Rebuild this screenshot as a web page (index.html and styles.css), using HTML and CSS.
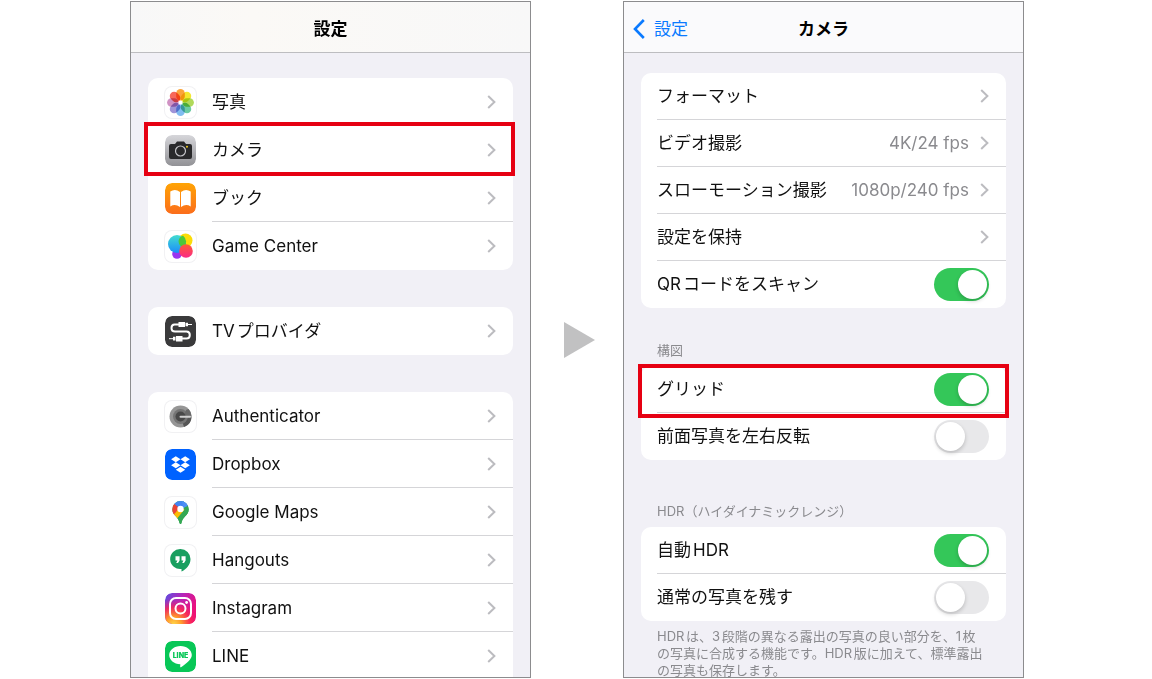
FILE: index.html
```html
<!DOCTYPE html>
<html lang="ja">
<head>
    <meta charset="UTF-8">
    <meta name="viewport" content="width=device-width, initial-scale=1.0">
    <title>設定 / カメラ</title>
    <link rel="stylesheet" href="styles.css">
</head>
<body>
    <svg class="defs" width="0" height="0" aria-hidden="true">
        <symbol id="chevron" viewBox="0 0 9 14">
            <path d="M1.2 1 L7.4 7 L1.2 13" fill="none" stroke="#bcbcc0" stroke-width="2"/>
        </symbol>
    </svg>

    <main class="steps">
        <section class="screen">
            <header class="navbar navbar-warm">
                <h1>設定</h1>
            </header>

            <div class="content">
                <nav class="card">
                    <a class="row" href="#photos">
                        <svg class="icon icon-white" viewBox="0 0 31 31">
                            <g class="petals" transform="translate(15.5 15.5)">
                                <rect x="-4.3" y="-13.4" width="8.6" height="11.4" rx="4.3" fill="#fba43a"/>
                                <rect x="-4.3" y="-13.4" width="8.6" height="11.4" rx="4.3" fill="#f4e730" transform="rotate(45)"/>
                                <rect x="-4.3" y="-13.4" width="8.6" height="11.4" rx="4.3" fill="#b0d95a" transform="rotate(90)"/>
                                <rect x="-4.3" y="-13.4" width="8.6" height="11.4" rx="4.3" fill="#6ccba2" transform="rotate(135)"/>
                                <rect x="-4.3" y="-13.4" width="8.6" height="11.4" rx="4.3" fill="#80bcf0" transform="rotate(180)"/>
                                <rect x="-4.3" y="-13.4" width="8.6" height="11.4" rx="4.3" fill="#a094d8" transform="rotate(225)"/>
                                <rect x="-4.3" y="-13.4" width="8.6" height="11.4" rx="4.3" fill="#d092c4" transform="rotate(270)"/>
                                <rect x="-4.3" y="-13.4" width="8.6" height="11.4" rx="4.3" fill="#f7685a" transform="rotate(315)"/>
                            </g>
                        </svg>
                        <span class="row-body">写真 <svg class="chevron"><use href="#chevron"/></svg></span>
                    </a>
                    <a class="row highlight highlight-link" href="#camera">
                        <svg class="icon" viewBox="0 0 31 31">
                            <defs>
                                <linearGradient id="silver" x1="0" y1="0" x2="0" y2="1">
                                    <stop offset="0" stop-color="#d6d6da"/>
                                    <stop offset="1" stop-color="#929296"/>
                                </linearGradient>
                            </defs>
                            <rect width="31" height="31" rx="7" fill="url(#silver)"/>
                            <path d="M6 9 H10 L12 6.5 H19 L21 9 H25 Q27 9 27 11 V22 Q27 24 25 24 H6 Q4 24 4 22 V11 Q4 9 6 9 Z" fill="#29292b"/>
                            <circle cx="15.5" cy="16" r="5" fill="#29292b" stroke="#c4c4c8" stroke-width="1.2"/>
                            <circle cx="22" cy="11.8" r="1" fill="#f3cf22"/>
                        </svg>
                        <span class="row-body">カメラ <svg class="chevron"><use href="#chevron"/></svg></span>
                    </a>
                    <a class="row" href="#books">
                        <svg class="icon" viewBox="0 0 31 31">
                            <defs>
                                <linearGradient id="orange" x1="0" y1="0" x2="0" y2="1">
                                    <stop offset="0" stop-color="#ffa405"/>
                                    <stop offset="1" stop-color="#fb6d1c"/>
                                </linearGradient>
                            </defs>
                            <rect width="31" height="31" rx="7" fill="url(#orange)"/>
                            <path d="M15 9 Q10 5 5.3 8.6 V23.5 Q10 20.5 15 24 Z M16 9 Q21 5 25.7 8.6 V23.5 Q21 20.5 16 24 Z" fill="#fff"/>
                        </svg>
                        <span class="row-body">ブック <svg class="chevron"><use href="#chevron"/></svg></span>
                    </a>
                    <a class="row" href="#game-center">
                        <svg class="icon icon-white" viewBox="0 0 31 31">
                            <defs>
                                <linearGradient id="gc-blue" x1="0" y1="0" x2="0" y2="1">
                                    <stop offset="0" stop-color="#42dcd0"/>
                                    <stop offset="1" stop-color="#1b8cfa"/>
                                </linearGradient>
                                <linearGradient id="gc-pink" x1="0" y1="0" x2="0" y2="1">
                                    <stop offset="0" stop-color="#ff5a36"/>
                                    <stop offset="1" stop-color="#fa2a86"/>
                                </linearGradient>
                            </defs>
                            <circle cx="20.5" cy="9.5" r="7" fill="#fbdc08"/>
                            <circle cx="12" cy="23" r="4.8" fill="#9a35f0"/>
                            <circle cx="12" cy="13" r="9" fill="url(#gc-blue)"/>
                            <path d="M13.5 10 A7 7 0 0 1 18 4.5 A9 9 0 0 1 19.4 16.5 A7 7 0 0 1 13.5 10 Z" fill="#4cc83a"/>
                            <circle cx="21" cy="20" r="6.8" fill="url(#gc-pink)"/>
                        </svg>
                        <span class="row-body">Game Center <svg class="chevron"><use href="#chevron"/></svg></span>
                    </a>
                </nav>

                <nav class="card">
                    <a class="row" href="#tv-provider">
                        <svg class="icon" viewBox="0 0 31 31">
                            <rect width="31" height="31" rx="7" fill="#3a3a3b"/>
                            <path d="M14 8.5 H9.5 Q6.5 8.5 6.5 12 Q6.5 15.5 10 15.5 H21.5 Q24.8 15.5 24.8 19 Q24.8 22.6 21.5 22.6 H17" fill="none" stroke="#fff" stroke-width="2"/>
                            <path d="M13.5 6 H20 V11 H13.5 Z M20.5 6.8 H23 V10.2 H20.5 Z M17.5 20 H11 V25.4 H17.5 Z M10.5 20.8 H8 V24.6 H10.5 Z" fill="#fff"/>
                            <path d="M23 8.5 H27 M4 22.7 H8" stroke="#fff" stroke-width="1"/>
                        </svg>
                        <span class="row-body">TVプロバイダ <svg class="chevron"><use href="#chevron"/></svg></span>
                    </a>
                </nav>

                <nav class="card">
                    <a class="row" href="#authenticator">
                        <svg class="icon icon-white" viewBox="0 0 31 31">
                            <circle cx="15.5" cy="15.5" r="11" fill="#969696"/>
                            <path d="M15.5 15.5 L26.5 15.5 A11 11 0 0 1 19 26 Z" fill="#565656"/>
                            <circle cx="15.5" cy="15.5" r="7.5" fill="#757575"/>
                            <path d="M21 9 L23.5 8 A11 11 0 0 1 26.5 15 L19 15 Z" fill="#686868"/>
                            <circle cx="15.5" cy="15.5" r="5" fill="#484848"/>
                            <path d="M15.5 15.7 H25" stroke="#cfcfcf" stroke-width="2" stroke-linecap="round"/>
                        </svg>
                        <span class="row-body">Authenticator <svg class="chevron"><use href="#chevron"/></svg></span>
                    </a>
                    <a class="row" href="#dropbox">
                        <svg class="icon" viewBox="0 0 31 31">
                            <rect width="31" height="31" rx="7" fill="#0062ff"/>
                            <path d="M10.8 7.2 L15.5 10.2 L10.8 13.2 L6.1 10.2 Z M20.2 7.2 L24.9 10.2 L20.2 13.2 L15.5 10.2 Z M10.8 13.3 L15.5 16.3 L10.8 19.3 L6.1 16.3 Z M20.2 13.3 L24.9 16.3 L20.2 19.3 L15.5 16.3 Z M15.5 17.7 L20.2 20.7 L15.5 23.7 L10.8 20.7 Z" fill="#fff"/>
                        </svg>
                        <span class="row-body">Dropbox <svg class="chevron"><use href="#chevron"/></svg></span>
                    </a>
                    <a class="row" href="#google-maps">
                        <svg class="icon icon-white" viewBox="0 0 31 31">
                            <defs>
                                <clipPath id="pin">
                                    <path d="M15.5 4 A8.2 8.2 0 0 1 23.7 12.2 C23.7 18.5 17.5 19.5 16.4 26.2 Q15.5 28 14.6 26.2 C13.5 19.5 7.3 18.5 7.3 12.2 A8.2 8.2 0 0 1 15.5 4 Z"/>
                                </clipPath>
                            </defs>
                            <g clip-path="url(#pin)">
                                <rect x="7" y="3" width="18" height="25" fill="#34a853"/>
                                <path d="M7 3 H25 V7.5 L15.5 12 L7 7 Z" fill="#4285f4"/>
                                <path d="M17 3 L25 3 V8 L18 11 Z" fill="#4d8ff5"/>
                                <path d="M7 5 L15.5 12 L8 20 L6 14 Z" fill="#ea4335"/>
                                <path d="M7.5 19 L15.5 10 L20 13 L11 23 Z" fill="#fbbc04"/>
                                <path d="M11 23 L24 7 L25 20 L16 28 Z" fill="#34a853"/>
                            </g>
                            <circle cx="15.5" cy="12" r="3.2" fill="#fff"/>
                        </svg>
                        <span class="row-body">Google Maps <svg class="chevron"><use href="#chevron"/></svg></span>
                    </a>
                    <a class="row" href="#hangouts">
                        <svg class="icon icon-white" viewBox="0 0 31 31">
                            <path d="M15.5 4 A10 10 0 0 1 25.5 14 C25.5 20 21 24.5 16.5 26.5 V23.9 A10 10 0 1 1 15.5 4 Z" fill="#1a9f60"/>
                            <path d="M10.5 11.2 H14.6 V15.4 L13 18 H11.2 L12.4 15.4 H10.5 Z M16.5 11.2 H20.6 V15.4 L19 18 H17.2 L18.4 15.4 H16.5 Z" fill="#fff"/>
                        </svg>
                        <span class="row-body">Hangouts <svg class="chevron"><use href="#chevron"/></svg></span>
                    </a>
                    <a class="row" href="#instagram">
                        <svg class="icon" viewBox="0 0 31 31">
                            <defs>
                                <linearGradient id="insta" x1="0" y1="0" x2="1" y2="0.5">
                                    <stop offset="0" stop-color="#5b4fe0"/>
                                    <stop offset="0.5" stop-color="#b824b8"/>
                                    <stop offset="1" stop-color="#f00f78"/>
                                </linearGradient>
                                <radialGradient id="insta-glow" cx="0.28" cy="1.02" r="0.85">
                                    <stop offset="0" stop-color="#ffd94a"/>
                                    <stop offset="0.3" stop-color="#ff9b2b"/>
                                    <stop offset="0.65" stop-color="#fb2a50" stop-opacity="0.85"/>
                                    <stop offset="1" stop-color="#e31680" stop-opacity="0"/>
                                </radialGradient>
                            </defs>
                            <rect width="31" height="31" rx="7" fill="url(#insta)"/>
                            <rect width="31" height="31" rx="7" fill="url(#insta-glow)"/>
                            <rect x="5" y="5" width="21" height="21" rx="6" fill="none" stroke="#fff" stroke-width="2"/>
                            <circle cx="15.5" cy="15.5" r="5" fill="none" stroke="#fff" stroke-width="2"/>
                            <circle cx="21.6" cy="9.5" r="1.4" fill="#fff"/>
                        </svg>
                        <span class="row-body">Instagram <svg class="chevron"><use href="#chevron"/></svg></span>
                    </a>
                    <a class="row" href="#line">
                        <svg class="icon" viewBox="0 0 31 31">
                            <rect width="31" height="31" rx="7" fill="#08c757"/>
                            <path d="M15.5 5 C21.8 5 26.8 9 26.8 14 C26.8 18.5 21 22.8 16 26.2 C15 26.7 15.2 25.6 15.3 23.2 C9 23 4.2 19 4.2 14 C4.2 9 9.2 5 15.5 5 Z" fill="#fff"/>
                            <text class="line-logo" x="15.5" y="16.6" text-anchor="middle">LINE</text>
                        </svg>
                        <span class="row-body">LINE <svg class="chevron"><use href="#chevron"/></svg></span>
                    </a>
                    <div class="row"></div>
                </nav>
            </div>
        </section>

        <svg class="arrow" viewBox="0 0 31 36" aria-hidden="true">
            <path d="M0 0 L31 18 L0 36 Z" fill="#c1c1c2"/>
        </svg>

        <section class="screen">
            <header class="navbar">
                <a class="back" href="#settings">
                    <svg viewBox="0 0 12 20"><path d="M10.8 1 L2 10 L10.8 19" fill="none" stroke="#0a7aff" stroke-width="2.6"/></svg>
                    設定
                </a>
                <h1>カメラ</h1>
            </header>

            <div class="content content-camera">
                <div class="card card-camera">
                    <a class="row" href="#format">
                        <span class="row-body">フォーマット <svg class="chevron"><use href="#chevron"/></svg></span>
                    </a>
                    <a class="row" href="#video">
                        <span class="row-body">ビデオ撮影 <span class="value">4K/24 fps</span> <svg class="chevron"><use href="#chevron"/></svg></span>
                    </a>
                    <a class="row" href="#slow-motion">
                        <span class="row-body">スローモーション撮影 <span class="value">1080p/240 fps</span> <svg class="chevron"><use href="#chevron"/></svg></span>
                    </a>
                    <a class="row" href="#keep-settings">
                        <span class="row-body">設定を保持 <svg class="chevron"><use href="#chevron"/></svg></span>
                    </a>
                    <div class="row">
                        <div class="row-body">
                            <label for="qr">QRコードをスキャン</label>
                            <input class="switch" type="checkbox" id="qr" checked>
                        </div>
                    </div>
                </div>

                <h2>構図</h2>
                <div class="card card-camera">
                    <div class="row highlight highlight-switch">
                        <div class="row-body">
                            <label for="grid">グリッド</label>
                            <input class="switch" type="checkbox" id="grid" checked>
                        </div>
                    </div>
                    <div class="row">
                        <div class="row-body">
                            <label for="mirror">前面写真を左右反転</label>
                            <input class="switch" type="checkbox" id="mirror">
                        </div>
                    </div>
                </div>

                <h2 class="spaced">HDR（ハイダイナミックレンジ）</h2>
                <div class="card card-camera">
                    <div class="row">
                        <div class="row-body">
                            <label for="hdr">自動HDR</label>
                            <input class="switch" type="checkbox" id="hdr" checked>
                        </div>
                    </div>
                    <div class="row">
                        <div class="row-body">
                            <label for="keep-normal">通常の写真を残す</label>
                            <input class="switch" type="checkbox" id="keep-normal">
                        </div>
                    </div>
                </div>
                <p class="note">HDRは、3段階の異なる露出の写真の良い部分を、1枚<br>の写真に合成する機能です。HDR版に加えて、標準露出<br>の写真も保存します。</p>
            </div>
        </section>
    </main>
</body>
</html>
```
FILE: styles.css
```css
* {
    box-sizing: border-box;
}
body {
    margin: 0;
    background: #ffffff;
    color: #111111;
    font-family: Inter, "Noto Sans CJK JP", sans-serif;
    font-size: 17px;
    line-height: 24px;
    text-autospace: normal;
}
a {
    color: inherit;
    text-decoration: none;
}
.defs {
    position: absolute;
}
.steps {
    display: flex;
    align-items: center;
    max-width: 896px;
    height: 100vh;
    margin: 0 auto;
    padding: 1px 0 1px 2px;
}

/* phone screens */
.screen {
    flex: 1;
    min-width: 0;
    height: 100%;
    overflow: hidden;
    background: #f1f0f6;
    border: 1px solid #8c8c8e;
}
.arrow {
    flex: none;
    width: 31px;
    height: 36px;
    margin: 0 28px 0 33px;
}
.navbar {
    position: relative;
    display: flex;
    align-items: center;
    justify-content: center;
    height: 51px;
    padding-top: 4px;
    background: #fafafc;
    border-bottom: 1px solid #bdbdc0;
}
.navbar-warm {
    background: linear-gradient(to right, #f8f8f8, #fbf9f6 30%, #f8f8f8);
}
h1 {
    margin: 0;
    color: #000000;
    font-size: 17px;
    font-weight: bold;
}
.back {
    position: absolute;
    left: 9px;
    display: flex;
    align-items: center;
    gap: 9px;
    color: #0a7aff;
}
.back svg {
    width: 12px;
    height: 20px;
}

/* lists */
.content {
    display: flex;
    flex-direction: column;
    gap: 37px;
    padding: 25px 17px 0;
}
.content-camera {
    gap: 0;
    padding-top: 20px;
}
.card {
    background: #ffffff;
    border-radius: 10px;
}
.row {
    position: relative;
    display: flex;
    align-items: center;
    gap: 16px;
    height: 48px;
    padding-left: 17px;
}
.card-camera .row {
    height: 47px;
    padding-left: 16px;
}
.row-body {
    flex: 1;
    display: flex;
    align-items: center;
    height: 100%;
    padding-right: 17px;
    border-bottom: 1px solid #d5d5d8;
    white-space: nowrap;
}
.row:last-child .row-body {
    border-bottom-color: transparent;
}
.icon {
    width: 31px;
    height: 31px;
    border-radius: 7px;
}
.icon-white {
    background: #ffffff;
    box-shadow: 0 0 0 1px #f1f1f3;
}
.petals rect {
    mix-blend-mode: multiply;
}
.line-logo {
    fill: #08c757;
    font-size: 7px;
    font-weight: 900;
}
.chevron {
    width: 9px;
    height: 14px;
    margin-left: auto;
}
.value {
    margin-left: auto;
    color: #8a8a8e;
}
.value + .chevron {
    margin-left: 11px;
}

/* red frames around the rows to tap */
.highlight::after {
    content: "";
    position: absolute;
    z-index: 1;
    border: 4px solid #e60012;
    pointer-events: none;
}
.highlight-link::after {
    inset: -4px -2px -2px -4px;
}
.highlight-switch::after {
    inset: -2px -3px -5px -3px;
}

.switch {
    appearance: none;
    width: 55px;
    height: 33px;
    margin: 0 0 0 auto;
    padding: 2px;
    background: #e8e8ea;
    border-radius: 17px;
}
.switch::before {
    content: "";
    display: block;
    width: 29px;
    height: 29px;
    background: #ffffff;
    border-radius: 50%;
    box-shadow: 0 2px 4px rgba(0, 0, 0, 0.2);
}
.switch:checked {
    background: #34c759;
}
.switch:checked::before {
    margin-left: 22px;
}

h2,
.note {
    margin: 0;
    color: #8a8a8e;
    font-size: 13px;
    font-weight: normal;
    line-height: 17px;
}
h2 {
    padding: 34px 16px 7px;
}
.spaced {
    padding-top: 43px;
}
.note {
    padding: 7px 16px 0;
    white-space: nowrap;
}
```
